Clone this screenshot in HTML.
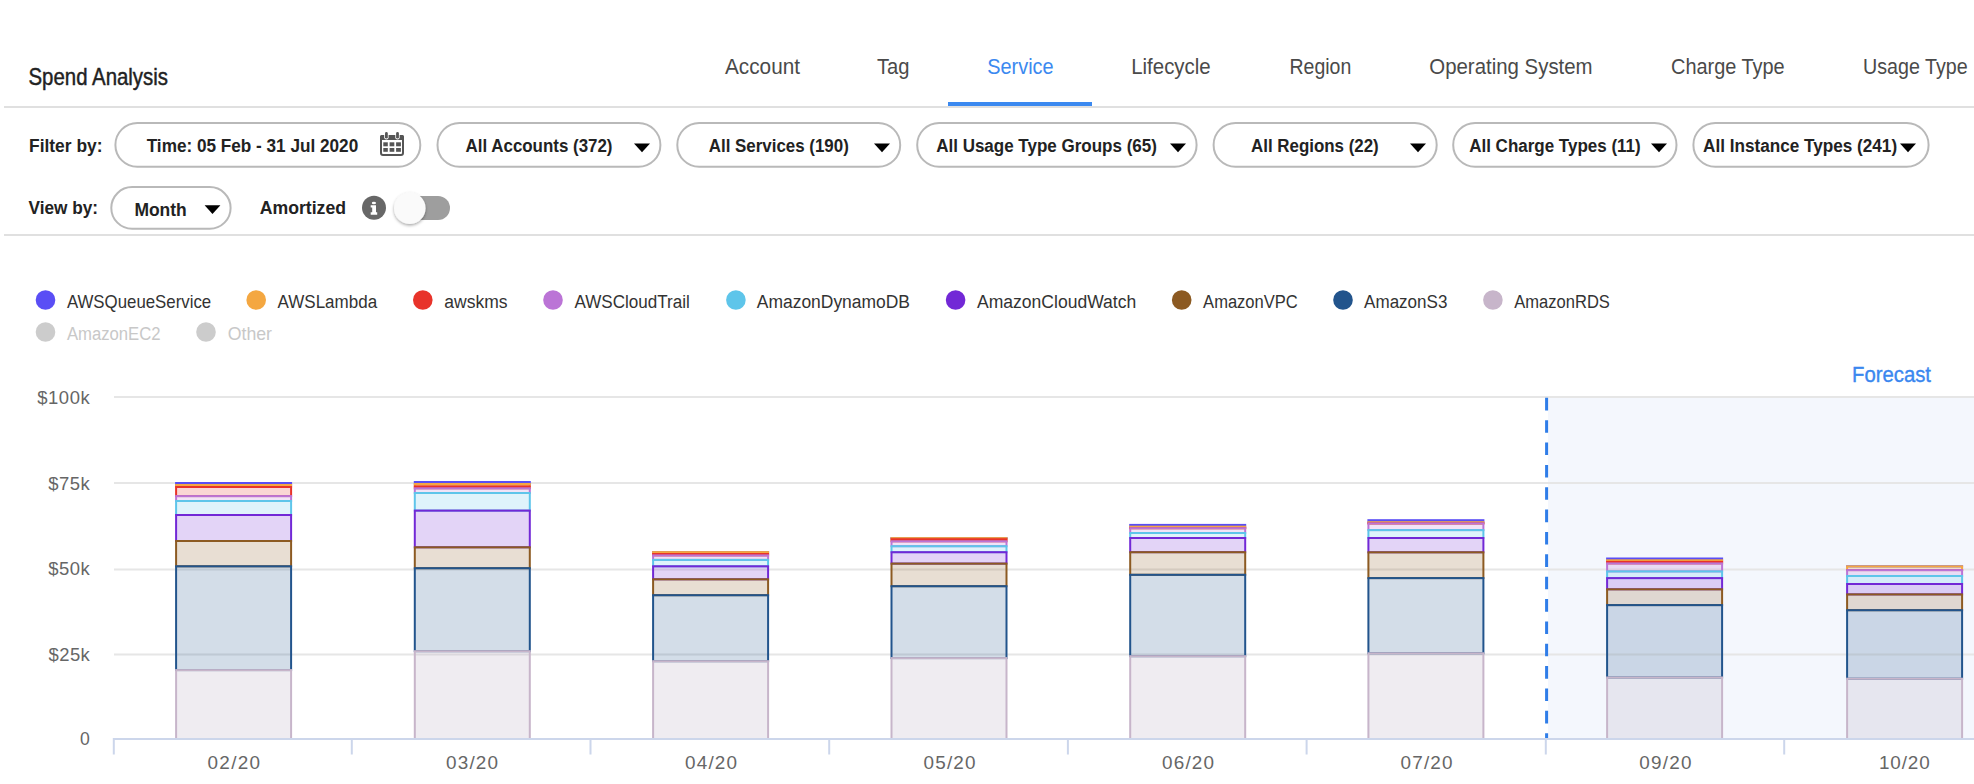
<!DOCTYPE html>
<html><head><meta charset="utf-8"><style>
html,body{margin:0;padding:0;background:#fff;width:1974px;height:784px;overflow:hidden}
svg{display:block;font-family:"Liberation Sans", sans-serif}
</style></head><body>
<svg width="1974" height="784" viewBox="0 0 1974 784">
<defs><filter id="sh" x="-50%" y="-50%" width="200%" height="200%"><feDropShadow dx="0" dy="1.5" stdDeviation="1.5" flood-color="#000" flood-opacity="0.35"/></filter></defs>
<text x="28.5" y="85" font-size="23.84" font-weight="normal" fill="#222" stroke="#222" stroke-width="0.45" textLength="139.5" lengthAdjust="spacingAndGlyphs">Spend Analysis</text>
<text x="725" y="74.3" font-size="22.38" font-weight="normal" fill="#4a4a4a" textLength="75" lengthAdjust="spacingAndGlyphs">Account</text>
<text x="877" y="74.3" font-size="22.38" font-weight="normal" fill="#4a4a4a" textLength="32.5" lengthAdjust="spacingAndGlyphs">Tag</text>
<text x="987.3" y="74.3" font-size="22.38" font-weight="normal" fill="#3b89f0" textLength="66.29999999999995" lengthAdjust="spacingAndGlyphs">Service</text>
<text x="1131.2" y="74.3" font-size="22.38" font-weight="normal" fill="#4a4a4a" textLength="79.5" lengthAdjust="spacingAndGlyphs">Lifecycle</text>
<text x="1289.5" y="74.3" font-size="22.38" font-weight="normal" fill="#4a4a4a" textLength="61.799999999999955" lengthAdjust="spacingAndGlyphs">Region</text>
<text x="1429.3" y="74.3" font-size="22.38" font-weight="normal" fill="#4a4a4a" textLength="163.29999999999995" lengthAdjust="spacingAndGlyphs">Operating System</text>
<text x="1671" y="74.3" font-size="22.38" font-weight="normal" fill="#4a4a4a" textLength="113.70000000000005" lengthAdjust="spacingAndGlyphs">Charge Type</text>
<text x="1863" y="74.3" font-size="22.38" font-weight="normal" fill="#4a4a4a" textLength="104.59999999999991" lengthAdjust="spacingAndGlyphs">Usage Type</text>
<rect x="4" y="106" width="1970" height="2" fill="#e0e0e0" />
<rect x="948" y="102" width="144" height="4" fill="#3b89f0" />
<text x="29" y="152" font-size="18.75" font-weight="bold" fill="#222" textLength="73.5" lengthAdjust="spacingAndGlyphs">Filter by:</text>
<rect x="115.4" y="123" width="304.9" height="43.8" rx="21.9" fill="#fff" stroke="#b9b9b9" stroke-width="2"/>
<text x="146.7" y="151.8" font-size="19.19" font-weight="bold" fill="#222" textLength="211.5" lengthAdjust="spacingAndGlyphs">Time: 05 Feb - 31 Jul 2020</text>
<rect x="437.5" y="123" width="222.89999999999998" height="43.8" rx="21.9" fill="#fff" stroke="#b9b9b9" stroke-width="2"/>
<text x="465.6" y="151.8" font-size="19.19" font-weight="bold" fill="#222" textLength="146.89999999999998" lengthAdjust="spacingAndGlyphs">All Accounts (372)</text>
<path d="M634 143.5 L650 143.5 L642 152.3 Z" fill="#000"/>
<rect x="677.3" y="123" width="222.9000000000001" height="43.8" rx="21.9" fill="#fff" stroke="#b9b9b9" stroke-width="2"/>
<text x="708.8" y="151.8" font-size="19.19" font-weight="bold" fill="#222" textLength="140.0" lengthAdjust="spacingAndGlyphs">All Services (190)</text>
<path d="M874 143.5 L890 143.5 L882 152.3 Z" fill="#000"/>
<rect x="917.2" y="123" width="279.39999999999986" height="43.8" rx="21.9" fill="#fff" stroke="#b9b9b9" stroke-width="2"/>
<text x="936.2" y="151.8" font-size="19.19" font-weight="bold" fill="#222" textLength="220.70000000000005" lengthAdjust="spacingAndGlyphs">All Usage Type Groups (65)</text>
<path d="M1170 143.5 L1186 143.5 L1178 152.3 Z" fill="#000"/>
<rect x="1213.6" y="123" width="223.10000000000014" height="43.8" rx="21.9" fill="#fff" stroke="#b9b9b9" stroke-width="2"/>
<text x="1251" y="151.8" font-size="19.19" font-weight="bold" fill="#222" textLength="127.70000000000005" lengthAdjust="spacingAndGlyphs">All Regions (22)</text>
<path d="M1410 143.5 L1426 143.5 L1418 152.3 Z" fill="#000"/>
<rect x="1453.2" y="123" width="223.29999999999995" height="43.8" rx="21.9" fill="#fff" stroke="#b9b9b9" stroke-width="2"/>
<text x="1469.2" y="151.8" font-size="19.19" font-weight="bold" fill="#222" textLength="171.5" lengthAdjust="spacingAndGlyphs">All Charge Types (11)</text>
<path d="M1651 143.5 L1667 143.5 L1659 152.3 Z" fill="#000"/>
<rect x="1693.4" y="123" width="235.19999999999982" height="43.8" rx="21.9" fill="#fff" stroke="#b9b9b9" stroke-width="2"/>
<text x="1703" y="151.8" font-size="19.19" font-weight="bold" fill="#222" textLength="194.0999999999999" lengthAdjust="spacingAndGlyphs">All Instance Types (241)</text>
<path d="M1900 143.5 L1916 143.5 L1908 152.3 Z" fill="#000"/>
<g fill="#555"><rect x="381" y="136" width="22" height="19" rx="2" fill="none" stroke="#555" stroke-width="2"/><rect x="380" y="135" width="24" height="5" rx="1.5"/><rect x="384.2" y="131.4" width="4.4" height="8" rx="2.2" fill="#fff"/><rect x="395.3" y="131.4" width="4.4" height="8" rx="2.2" fill="#fff"/><rect x="385" y="132" width="2.8" height="6.6" rx="1.4"/><rect x="396.1" y="132" width="2.8" height="6.6" rx="1.4"/><rect x="383.3" y="142.3" width="4.5" height="4"/><rect x="389.6" y="142.3" width="4.7" height="4"/><rect x="396.1" y="142.3" width="4.8" height="4"/><rect x="383.3" y="148" width="4.5" height="3.8"/><rect x="389.6" y="148" width="4.7" height="3.8"/><rect x="396.1" y="148" width="4.8" height="3.8"/></g>
<text x="28.5" y="214.2" font-size="18.60" font-weight="bold" fill="#222" textLength="69.5" lengthAdjust="spacingAndGlyphs">View by:</text>
<rect x="111.3" y="187.1" width="119.3" height="41.6" rx="20.8" fill="#fff" stroke="#b9b9b9" stroke-width="2"/>
<text x="134.4" y="215.8" font-size="18.60" font-weight="bold" fill="#222" textLength="52.4" lengthAdjust="spacingAndGlyphs">Month</text>
<path d="M204.6 205.3 L220.4 205.3 L212.5 214 Z" fill="#000"/>
<text x="259.7" y="214.2" font-size="19.19" font-weight="bold" fill="#222" textLength="86.3" lengthAdjust="spacingAndGlyphs">Amortized</text>
<circle cx="374" cy="207.8" r="12" fill="#676767"/>
<ellipse cx="373.9" cy="203" rx="2.1" ry="1.3" fill="#fff"/><path d="M370.7 205.2 H376 V212.2 H377.2 V214.8 H370.7 V212.2 H372.2 V207.6 H370.7 Z" fill="#fff"/>
<rect x="396" y="196" width="54" height="24" rx="12" fill="#9e9e9e"/>
<circle cx="409.8" cy="208.2" r="15.8" fill="#fafafa" filter="url(#sh)"/>
<rect x="4" y="234" width="1970" height="2" fill="#e0e0e0" />
<circle cx="45.5" cy="300" r="9.8" fill="#5a4ef5"/>
<text x="66.9" y="307.9" font-size="18.46" font-weight="normal" fill="#333" textLength="144.29999999999998" lengthAdjust="spacingAndGlyphs">AWSQueueService</text>
<circle cx="256.2" cy="300" r="9.8" fill="#f4a741"/>
<text x="277.6" y="307.9" font-size="18.46" font-weight="normal" fill="#333" textLength="99.5" lengthAdjust="spacingAndGlyphs">AWSLambda</text>
<circle cx="422.8" cy="300" r="9.8" fill="#e8332a"/>
<text x="444.3" y="307.9" font-size="18.46" font-weight="normal" fill="#333" textLength="63.30000000000001" lengthAdjust="spacingAndGlyphs">awskms</text>
<circle cx="553" cy="300" r="9.8" fill="#bb74d6"/>
<text x="574.4" y="307.9" font-size="18.46" font-weight="normal" fill="#333" textLength="115.39999999999998" lengthAdjust="spacingAndGlyphs">AWSCloudTrail</text>
<circle cx="735.9" cy="300" r="9.8" fill="#5ec5ea"/>
<text x="756.8" y="307.9" font-size="18.46" font-weight="normal" fill="#333" textLength="153.20000000000005" lengthAdjust="spacingAndGlyphs">AmazonDynamoDB</text>
<circle cx="955.6" cy="300" r="9.8" fill="#7228d6"/>
<text x="977" y="307.9" font-size="18.46" font-weight="normal" fill="#333" textLength="159.20000000000005" lengthAdjust="spacingAndGlyphs">AmazonCloudWatch</text>
<circle cx="1181.7" cy="300" r="9.8" fill="#8c5a22"/>
<text x="1203.1" y="307.9" font-size="18.46" font-weight="normal" fill="#333" textLength="94.70000000000005" lengthAdjust="spacingAndGlyphs">AmazonVPC</text>
<circle cx="1343" cy="300" r="9.8" fill="#22548c"/>
<text x="1364.1" y="307.9" font-size="18.46" font-weight="normal" fill="#333" textLength="83.30000000000018" lengthAdjust="spacingAndGlyphs">AmazonS3</text>
<circle cx="1492.9" cy="300" r="9.8" fill="#c7b5ca"/>
<text x="1514.3" y="307.9" font-size="18.46" font-weight="normal" fill="#333" textLength="95.60000000000014" lengthAdjust="spacingAndGlyphs">AmazonRDS</text>
<circle cx="45.5" cy="332" r="9.8" fill="#cccccc"/>
<text x="66.9" y="340.3" font-size="18.46" font-weight="normal" fill="#c8c8c8" textLength="93.69999999999999" lengthAdjust="spacingAndGlyphs">AmazonEC2</text>
<circle cx="206" cy="332" r="9.8" fill="#cccccc"/>
<text x="227.7" y="340.3" font-size="18.46" font-weight="normal" fill="#c8c8c8" textLength="44.30000000000001" lengthAdjust="spacingAndGlyphs">Other</text>
<text x="1852.1" y="382" font-size="21.22" font-weight="normal" fill="#3a87ef" stroke="#3a87ef" stroke-width="0.35" textLength="78.9" lengthAdjust="spacingAndGlyphs">Forecast</text>
<rect x="1548" y="397" width="426" height="342" fill="#f4f7fd" />
<rect x="114" y="396" width="1860" height="2" fill="#e6e6e6" />
<rect x="114" y="482" width="1860" height="2" fill="#e6e6e6" />
<rect x="114" y="568.5" width="1860" height="2" fill="#e6e6e6" />
<rect x="114" y="653.5" width="1860" height="2" fill="#e6e6e6" />
<text x="37.2" y="403.7" font-size="18.46" font-weight="normal" fill="#666" textLength="52.5" lengthAdjust="spacing">$100k</text>
<text x="48.3" y="489.5" font-size="18.46" font-weight="normal" fill="#666" textLength="41.400000000000006" lengthAdjust="spacing">$75k</text>
<text x="48.3" y="575" font-size="18.46" font-weight="normal" fill="#666" textLength="41.400000000000006" lengthAdjust="spacing">$50k</text>
<text x="48.5" y="660.5" font-size="18.46" font-weight="normal" fill="#666" textLength="41.3" lengthAdjust="spacing">$25k</text>
<text x="80" y="745.3" font-size="18.46" font-weight="normal" fill="#666" textLength="9.799999999999997" lengthAdjust="spacingAndGlyphs">0</text>
<rect x="176.1" y="483" width="115" height="2" fill="#5a4ef5" fill-opacity="0.2" stroke="#5a4ef5" stroke-width="2"/>
<rect x="176.1" y="485" width="115" height="2" fill="#f4a741" fill-opacity="0.2" stroke="#f4a741" stroke-width="2"/>
<rect x="176.1" y="487" width="115" height="9.100000000000023" fill="#e8332a" fill-opacity="0.2" stroke="#e8332a" stroke-width="2"/>
<rect x="176.1" y="496.1" width="115" height="4.899999999999977" fill="#bb74d6" fill-opacity="0.2" stroke="#bb74d6" stroke-width="2"/>
<rect x="176.1" y="501" width="115" height="14" fill="#5ec5ea" fill-opacity="0.2" stroke="#5ec5ea" stroke-width="2"/>
<rect x="176.1" y="515" width="115" height="26" fill="#7228d6" fill-opacity="0.2" stroke="#7228d6" stroke-width="2"/>
<rect x="176.1" y="541" width="115" height="25.299999999999955" fill="#8c5a22" fill-opacity="0.2" stroke="#8c5a22" stroke-width="2"/>
<rect x="176.1" y="566.3" width="115" height="103.80000000000007" fill="#22548c" fill-opacity="0.2" stroke="#22548c" stroke-width="2"/>
<rect x="176.1" y="670.1" width="115" height="68.89999999999998" fill="#b9adc3" fill-opacity="0.23" stroke="#c7b5ca" stroke-width="2"/>
<rect x="414.8" y="482" width="115" height="2" fill="#5a4ef5" fill-opacity="0.2" stroke="#5a4ef5" stroke-width="2"/>
<rect x="414.8" y="484" width="115" height="2.3999999999999773" fill="#f4a741" fill-opacity="0.2" stroke="#f4a741" stroke-width="2"/>
<rect x="414.8" y="486.4" width="115" height="1.900000000000034" fill="#e8332a" fill-opacity="0.2" stroke="#e8332a" stroke-width="2"/>
<rect x="414.8" y="488.3" width="115" height="4.699999999999989" fill="#bb74d6" fill-opacity="0.2" stroke="#bb74d6" stroke-width="2"/>
<rect x="414.8" y="493" width="115" height="17.600000000000023" fill="#5ec5ea" fill-opacity="0.2" stroke="#5ec5ea" stroke-width="2"/>
<rect x="414.8" y="510.6" width="115" height="36.69999999999993" fill="#7228d6" fill-opacity="0.2" stroke="#7228d6" stroke-width="2"/>
<rect x="414.8" y="547.3" width="115" height="20.90000000000009" fill="#8c5a22" fill-opacity="0.2" stroke="#8c5a22" stroke-width="2"/>
<rect x="414.8" y="568.2" width="115" height="83.0" fill="#22548c" fill-opacity="0.2" stroke="#22548c" stroke-width="2"/>
<rect x="414.8" y="651.2" width="115" height="87.79999999999995" fill="#b9adc3" fill-opacity="0.23" stroke="#c7b5ca" stroke-width="2"/>
<rect x="653.1" y="552" width="115" height="0.10000000000002274" fill="#5a4ef5" fill-opacity="0.2" stroke="#5a4ef5" stroke-width="2"/>
<rect x="653.1" y="552.1" width="115" height="1.8999999999999773" fill="#f4a741" fill-opacity="0.2" stroke="#f4a741" stroke-width="2"/>
<rect x="653.1" y="554" width="115" height="1.3999999999999773" fill="#e8332a" fill-opacity="0.2" stroke="#e8332a" stroke-width="2"/>
<rect x="653.1" y="555.4" width="115" height="4.5" fill="#bb74d6" fill-opacity="0.2" stroke="#bb74d6" stroke-width="2"/>
<rect x="653.1" y="559.9" width="115" height="6.399999999999977" fill="#5ec5ea" fill-opacity="0.2" stroke="#5ec5ea" stroke-width="2"/>
<rect x="653.1" y="566.3" width="115" height="13.0" fill="#7228d6" fill-opacity="0.2" stroke="#7228d6" stroke-width="2"/>
<rect x="653.1" y="579.3" width="115" height="15.900000000000091" fill="#8c5a22" fill-opacity="0.2" stroke="#8c5a22" stroke-width="2"/>
<rect x="653.1" y="595.2" width="115" height="66.0" fill="#22548c" fill-opacity="0.2" stroke="#22548c" stroke-width="2"/>
<rect x="653.1" y="661.2" width="115" height="77.79999999999995" fill="#b9adc3" fill-opacity="0.23" stroke="#c7b5ca" stroke-width="2"/>
<rect x="891.5" y="538" width="115" height="0.10000000000002274" fill="#5a4ef5" fill-opacity="0.2" stroke="#5a4ef5" stroke-width="2"/>
<rect x="891.5" y="538.1" width="115" height="1.1000000000000227" fill="#f4a741" fill-opacity="0.2" stroke="#f4a741" stroke-width="2"/>
<rect x="891.5" y="539.2" width="115" height="2.099999999999909" fill="#e8332a" fill-opacity="0.2" stroke="#e8332a" stroke-width="2"/>
<rect x="891.5" y="541.3" width="115" height="4.900000000000091" fill="#bb74d6" fill-opacity="0.2" stroke="#bb74d6" stroke-width="2"/>
<rect x="891.5" y="546.2" width="115" height="6.0" fill="#5ec5ea" fill-opacity="0.2" stroke="#5ec5ea" stroke-width="2"/>
<rect x="891.5" y="552.2" width="115" height="11.399999999999977" fill="#7228d6" fill-opacity="0.2" stroke="#7228d6" stroke-width="2"/>
<rect x="891.5" y="563.6" width="115" height="22.600000000000023" fill="#8c5a22" fill-opacity="0.2" stroke="#8c5a22" stroke-width="2"/>
<rect x="891.5" y="586.2" width="115" height="71.89999999999998" fill="#22548c" fill-opacity="0.2" stroke="#22548c" stroke-width="2"/>
<rect x="891.5" y="658.1" width="115" height="80.89999999999998" fill="#b9adc3" fill-opacity="0.23" stroke="#c7b5ca" stroke-width="2"/>
<rect x="1130.2" y="524.9" width="115" height="1.8000000000000682" fill="#5a4ef5" fill-opacity="0.2" stroke="#5a4ef5" stroke-width="2"/>
<rect x="1130.2" y="526.7" width="115" height="1.5" fill="#f4a741" fill-opacity="0.2" stroke="#f4a741" stroke-width="2"/>
<rect x="1130.2" y="528.2" width="115" height="0.01" fill="#e8332a" fill-opacity="0.2" stroke="#e8332a" stroke-width="2"/>
<rect x="1130.2" y="528.2" width="115" height="4.7999999999999545" fill="#bb74d6" fill-opacity="0.2" stroke="#bb74d6" stroke-width="2"/>
<rect x="1130.2" y="533" width="115" height="5" fill="#5ec5ea" fill-opacity="0.2" stroke="#5ec5ea" stroke-width="2"/>
<rect x="1130.2" y="538" width="115" height="14.200000000000045" fill="#7228d6" fill-opacity="0.2" stroke="#7228d6" stroke-width="2"/>
<rect x="1130.2" y="552.2" width="115" height="22.59999999999991" fill="#8c5a22" fill-opacity="0.2" stroke="#8c5a22" stroke-width="2"/>
<rect x="1130.2" y="574.8" width="115" height="81.40000000000009" fill="#22548c" fill-opacity="0.2" stroke="#22548c" stroke-width="2"/>
<rect x="1130.2" y="656.2" width="115" height="82.79999999999995" fill="#b9adc3" fill-opacity="0.23" stroke="#c7b5ca" stroke-width="2"/>
<rect x="1368.4" y="520.2" width="115" height="2.0" fill="#5a4ef5" fill-opacity="0.2" stroke="#5a4ef5" stroke-width="2"/>
<rect x="1368.4" y="522.2" width="115" height="1.1999999999999318" fill="#f4a741" fill-opacity="0.2" stroke="#f4a741" stroke-width="2"/>
<rect x="1368.4" y="523.4" width="115" height="0.01" fill="#e8332a" fill-opacity="0.2" stroke="#e8332a" stroke-width="2"/>
<rect x="1368.4" y="523.4" width="115" height="6.7000000000000455" fill="#bb74d6" fill-opacity="0.2" stroke="#bb74d6" stroke-width="2"/>
<rect x="1368.4" y="530.1" width="115" height="7.899999999999977" fill="#5ec5ea" fill-opacity="0.2" stroke="#5ec5ea" stroke-width="2"/>
<rect x="1368.4" y="538" width="115" height="14.299999999999955" fill="#7228d6" fill-opacity="0.2" stroke="#7228d6" stroke-width="2"/>
<rect x="1368.4" y="552.3" width="115" height="25.800000000000068" fill="#8c5a22" fill-opacity="0.2" stroke="#8c5a22" stroke-width="2"/>
<rect x="1368.4" y="578.1" width="115" height="75.19999999999993" fill="#22548c" fill-opacity="0.2" stroke="#22548c" stroke-width="2"/>
<rect x="1368.4" y="653.3" width="115" height="85.70000000000005" fill="#b9adc3" fill-opacity="0.23" stroke="#c7b5ca" stroke-width="2"/>
<rect x="1607.1" y="558.5" width="115" height="1.7999999999999545" fill="#5a4ef5" fill-opacity="0.2" stroke="#5a4ef5" stroke-width="2"/>
<rect x="1607.1" y="560.3" width="115" height="1.6000000000000227" fill="#f4a741" fill-opacity="0.2" stroke="#f4a741" stroke-width="2"/>
<rect x="1607.1" y="561.9" width="115" height="1.5" fill="#e8332a" fill-opacity="0.2" stroke="#e8332a" stroke-width="2"/>
<rect x="1607.1" y="563.4" width="115" height="8.0" fill="#bb74d6" fill-opacity="0.2" stroke="#bb74d6" stroke-width="2"/>
<rect x="1607.1" y="571.4" width="115" height="6.7000000000000455" fill="#5ec5ea" fill-opacity="0.2" stroke="#5ec5ea" stroke-width="2"/>
<rect x="1607.1" y="578.1" width="115" height="11.199999999999932" fill="#7228d6" fill-opacity="0.2" stroke="#7228d6" stroke-width="2"/>
<rect x="1607.1" y="589.3" width="115" height="15.800000000000068" fill="#8c5a22" fill-opacity="0.2" stroke="#8c5a22" stroke-width="2"/>
<rect x="1607.1" y="605.1" width="115" height="72.39999999999998" fill="#22548c" fill-opacity="0.2" stroke="#22548c" stroke-width="2"/>
<rect x="1607.1" y="677.5" width="115" height="61.5" fill="#b9adc3" fill-opacity="0.23" stroke="#c7b5ca" stroke-width="2"/>
<rect x="1847.1" y="566.3" width="115" height="0.10000000000002274" fill="#5a4ef5" fill-opacity="0.2" stroke="#5a4ef5" stroke-width="2"/>
<rect x="1847.1" y="566.4" width="115" height="3.6000000000000227" fill="#f4a741" fill-opacity="0.2" stroke="#f4a741" stroke-width="2"/>
<rect x="1847.1" y="570" width="115" height="0.10000000000002274" fill="#e8332a" fill-opacity="0.2" stroke="#e8332a" stroke-width="2"/>
<rect x="1847.1" y="570.1" width="115" height="5.899999999999977" fill="#bb74d6" fill-opacity="0.2" stroke="#bb74d6" stroke-width="2"/>
<rect x="1847.1" y="576" width="115" height="8" fill="#5ec5ea" fill-opacity="0.2" stroke="#5ec5ea" stroke-width="2"/>
<rect x="1847.1" y="584" width="115" height="10.399999999999977" fill="#7228d6" fill-opacity="0.2" stroke="#7228d6" stroke-width="2"/>
<rect x="1847.1" y="594.4" width="115" height="15.800000000000068" fill="#8c5a22" fill-opacity="0.2" stroke="#8c5a22" stroke-width="2"/>
<rect x="1847.1" y="610.2" width="115" height="68.5" fill="#22548c" fill-opacity="0.2" stroke="#22548c" stroke-width="2"/>
<rect x="1847.1" y="678.7" width="115" height="60.299999999999955" fill="#b9adc3" fill-opacity="0.23" stroke="#c7b5ca" stroke-width="2"/>
<rect x="114" y="738" width="1860" height="2" fill="#ccd6eb" />
<rect x="112.8" y="738" width="2" height="16.5" fill="#ccd6eb" />
<rect x="350.8" y="738" width="2" height="16.5" fill="#ccd6eb" />
<rect x="589.5" y="738" width="2" height="16.5" fill="#ccd6eb" />
<rect x="828.2" y="738" width="2" height="16.5" fill="#ccd6eb" />
<rect x="1066.9" y="738" width="2" height="16.5" fill="#ccd6eb" />
<rect x="1305.6" y="738" width="2" height="16.5" fill="#ccd6eb" />
<rect x="1544.8" y="738" width="2" height="16.5" fill="#ccd6eb" />
<rect x="1783.2" y="738" width="2" height="16.5" fill="#ccd6eb" />
<text x="207.5" y="769.2" font-size="18.90" font-weight="normal" fill="#666" textLength="52.5" lengthAdjust="spacing">02/20</text>
<text x="446.1" y="769.2" font-size="18.90" font-weight="normal" fill="#666" textLength="51.89999999999998" lengthAdjust="spacing">03/20</text>
<text x="685" y="769.2" font-size="18.90" font-weight="normal" fill="#666" textLength="52" lengthAdjust="spacing">04/20</text>
<text x="923.5" y="769.2" font-size="18.90" font-weight="normal" fill="#666" textLength="52.0" lengthAdjust="spacing">05/20</text>
<text x="1162" y="769.2" font-size="18.90" font-weight="normal" fill="#666" textLength="52" lengthAdjust="spacing">06/20</text>
<text x="1400.5" y="769.2" font-size="18.90" font-weight="normal" fill="#666" textLength="52.0" lengthAdjust="spacing">07/20</text>
<text x="1639.3" y="769.2" font-size="18.90" font-weight="normal" fill="#666" textLength="52.299999999999955" lengthAdjust="spacing">09/20</text>
<text x="1878.9" y="769.2" font-size="18.90" font-weight="normal" fill="#666" textLength="50.899999999999864" lengthAdjust="spacing">10/20</text>
<line x1="1546.6" y1="397.8" x2="1546.6" y2="738" stroke="#2f7de8" stroke-width="3" stroke-dasharray="12.6 9.76"/>
</svg>
</body></html>
